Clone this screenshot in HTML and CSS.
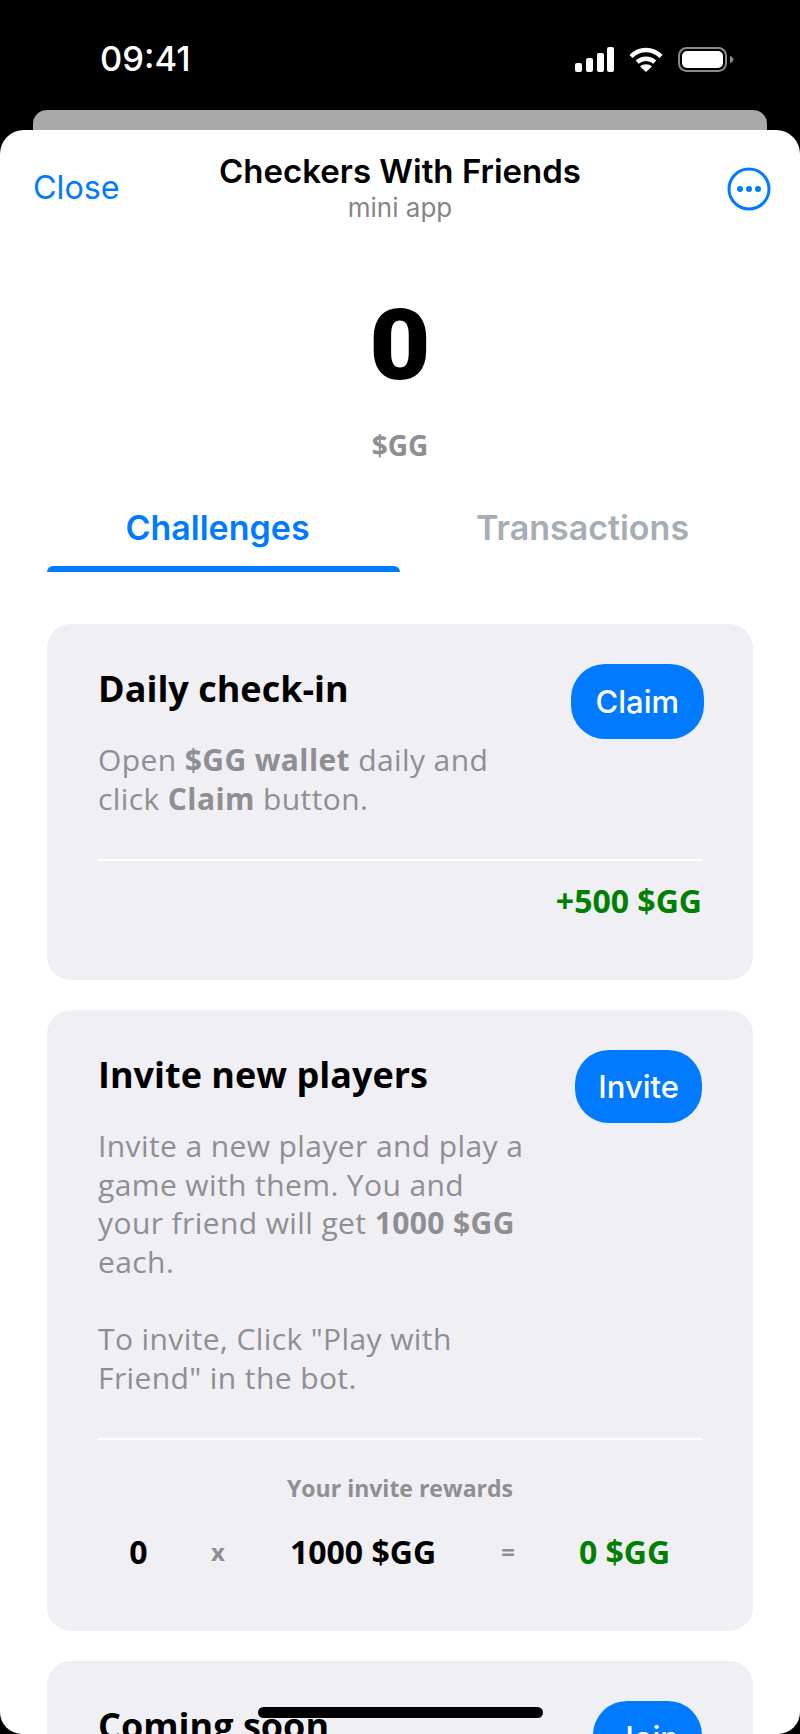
FILE: index.html
```html
<!DOCTYPE html>
<html lang="en">

<head>
    <meta charset="UTF-8">
    <meta name="viewport" content="width=device-width, initial-scale=1.0">
    <title>Checkers With Friends</title>
    <link rel="stylesheet" href="styles.css">
</head>

<body>
    <div class="screen">
        <div class="status-bar">
            <span class="time">09:41</span>
            <div class="status-icons">
                <svg class="signal" width="39" height="25" viewBox="0 0 39 25" fill="#fff">
                    <rect x="0" y="16" width="7" height="9" rx="2"></rect>
                    <rect x="11" y="11" width="7" height="14" rx="2"></rect>
                    <rect x="22" y="6" width="7" height="19" rx="2"></rect>
                    <rect x="32" y="0" width="7" height="25" rx="2"></rect>
                </svg>
                <svg class="wifi" width="34" height="25" viewBox="0 0 34 25" fill="none" stroke="#fff" stroke-width="4.4">
                    <path d="M2 9.5C10.5 .8 23.5 .8 32 9.5"></path>
                    <path d="M8.2 15.2C13.2 10.6 20.8 10.6 25.8 15.2"></path>
                    <path d="M17 25L11 19.4C14.4 16.6 19.6 16.6 23 19.4Z" fill="#fff" stroke="none"></path>
                </svg>
                <svg class="battery" width="56" height="25" viewBox="0 0 56 25">
                    <rect x="1" y="1" width="47" height="23" rx="7.5" fill="none" stroke="#8a8a8a" stroke-width="2"></rect>
                    <rect x="4" y="4" width="41" height="17" rx="5" fill="#fff"></rect>
                    <path d="M52 9C54 9.6 55.5 11 55.5 12.5S54 15.4 52 16Z" fill="#8a8a8a"></path>
                </svg>
            </div>
        </div>
        <div class="sheet-behind"></div>

        <div class="sheet">
            <header class="nav">
                <a class="close">Close</a>
                <div class="nav-title">
                    <h1>Checkers With Friends</h1>
                    <p>mini app</p>
                </div>
                <svg class="more" width="44" height="44" viewBox="0 0 44 44">
                    <circle cx="22" cy="22" r="20" fill="none" stroke="#007aff" stroke-width="3"></circle>
                    <circle cx="13" cy="22" r="3" fill="#007aff"></circle>
                    <circle cx="22" cy="22" r="3" fill="#007aff"></circle>
                    <circle cx="31" cy="22" r="3" fill="#007aff"></circle>
                </svg>
            </header>

            <div class="balance">
                <div class="balance-value">0</div>
                <div class="balance-unit">$GG</div>
            </div>

            <div class="tabs">
                <div class="tab active">Challenges</div>
                <div class="tab">Transactions</div>
            </div>

            <section class="card">
                <div class="card-top">
                    <div class="card-text">
                        <h2>Daily check-in</h2>
                        <p>Open <b>$GG wallet</b> daily and<br>click <b>Claim</b> button.</p>
                    </div>
                    <button class="action claim">Claim</button>
                </div>
                <div class="divider"></div>
                <div class="reward">+500 $GG</div>
            </section>

            <section class="card">
                <div class="card-top">
                    <div class="card-text">
                        <h2>Invite new players</h2>
                        <p>Invite a new player and play a<br>game with them. You and<br>your friend will get <b>1000 $GG</b><br>each.<br><br>To invite, Click "Play with<br>Friend" in the bot.</p>
                    </div>
                    <button class="action invite">Invite</button>
                </div>
                <div class="divider"></div>
                <div class="rewards-label">Your invite rewards</div>
                <div class="rewards-row">
                    <span>0</span>
                    <span class="sign">x</span>
                    <span>1000 $GG</span>
                    <span class="sign">=</span>
                    <span class="green">0 $GG</span>
                </div>
            </section>

            <section class="card">
                <div class="card-top">
                    <div class="card-text">
                        <h2>Coming soon</h2>
                    </div>
                    <button class="action join">Join</button>
                </div>
            </section>

            <div class="home-indicator"></div>
        </div>
    </div>
</body>

</html>
```

FILE: styles.css
```css
/* styles.css */

* {
    box-sizing: border-box;
}

html,
body {
    margin: 0;
    padding: 0;
    background-color: #000;
}

.screen {
    width: 800px;
    height: 1734px;
    overflow: hidden;
    font-family: "Open Sans", sans-serif;
}

.status-bar {
    height: 110px;
    padding: 40px 66px 0 100px;
    display: flex;
    justify-content: space-between;
    align-items: flex-start;
}

.time {
    color: #fff;
    font-family: Inter, sans-serif;
    font-size: 34.5px;
    font-weight: 500;
    line-height: 38px;
}

.status-icons {
    margin-top: 7px;
    display: flex;
    gap: 15px;
}

.sheet-behind {
    height: 20px;
    margin: 0 33px;
    background-color: #a9a9a9;
    border-radius: 14px 14px 0 0;
}

.sheet {
    position: relative;
    height: 1604px;
    padding: 0 47px;
    overflow: hidden;
    background-color: #fff;
    border-radius: 24px 24px 22px 22px;
}

.nav {
    height: 104px;
    margin: 0 -47px;
    padding: 0 33px;
    display: grid;
    grid-template-columns: 1fr auto 1fr;
    align-items: start;
}

.close {
    margin-top: 39px;
    color: #007aff;
    font-family: Inter, sans-serif;
    font-size: 32.3px;
    line-height: 38px;
}

.nav-title {
    margin-top: 20px;
    text-align: center;
}

.nav-title h1 {
    margin: 0;
    font-family: Inter, sans-serif;
    font-size: 33px;
    font-weight: 600;
    line-height: 43px;
    color: #000;
}

.nav-title p {
    margin: 0;
    font-family: Inter, sans-serif;
    font-size: 26px;
    line-height: 30px;
    color: #85858a;
}

.more {
    margin: 37px -4px 0 0;
    justify-self: end;
}

.balance {
    padding-top: 48px;
    text-align: center;
}

.balance-value {
    height: 118px;
    font-family: Roboto, sans-serif;
    font-size: 98px;
    font-weight: 900;
    line-height: 128px;
    color: #000;
    transform: scaleX(1.08);
}

.balance-unit {
    margin-top: 28px;
    font-size: 28px;
    font-weight: 700;
    line-height: 34px;
    color: #8e8e93;
}

.tabs {
    margin-top: 40px;
    display: grid;
    grid-template-columns: 353px 353px;
}

.tab {
    height: 70px;
    padding: 6px 0 0 12px;
    text-align: center;
    font-family: Inter, sans-serif;
    font-size: 34px;
    font-weight: 600;
    line-height: 40px;
    color: #a5adb5;
}

.tab.active {
    padding: 6px 12px 0 0;
    color: #007aff;
}

.tab.active::after {
    content: "";
    display: block;
    height: 6px;
    margin: 18px -12px 0 0;
    background-color: #007aff;
    border-radius: 6px 6px 0 0;
}

.card {
    margin-top: 52px;
    margin-bottom: -22px;
    padding: 40px 51px 0;
    height: 356px;
    background-color: #efeff4;
    border-radius: 24px;
}

.card+.card {
    height: 621px;
}

.card-top {
    display: flex;
    justify-content: space-between;
    align-items: flex-start;
}

.card h2 {
    margin: 5px 0 0;
    font-size: 36px;
    font-weight: 700;
    line-height: 40px;
    color: #000;
}

.card p {
    margin: 32px 0 0;
    font-size: 30px;
    line-height: 38.6px;
    letter-spacing: 0.4px;
    white-space: nowrap;
    color: #8e8e93;
}

.card p b {
    font-weight: 700;
}

.action {
    height: 73px;
    padding: 0 25px;
    border: none;
    border-radius: 34px;
    background-color: #007aff;
    color: #fff;
    font-family: Inter, sans-serif;
    font-size: 31px;
    font-weight: 500;
}

.claim {
    height: 75px;
    margin-right: -2px;
}

.invite {
    padding: 0 23px;
}

.join {
    padding: 0 23px;
}

.divider {
    height: 2px;
    margin-top: 41px;
    background-color: #fff;
}

.reward {
    margin-top: 22px;
    text-align: right;
    font-size: 32px;
    font-weight: 700;
    line-height: 36px;
    color: #008000;
}

.rewards-label {
    margin-top: 33px;
    text-align: center;
    font-size: 23px;
    font-weight: 700;
    line-height: 30px;
    color: #8e8e93;
}

.rewards-row {
    margin-top: 29px;
    display: grid;
    grid-template-columns: 81px 78px 212px 78px 155px;
    text-align: center;
    font-size: 32px;
    font-weight: 700;
    line-height: 40px;
    color: #000;
}

.rewards-row .sign {
    font-size: 24px;
    color: #8e8e93;
}

.rewards-row .green {
    color: #008000;
}

.home-indicator {
    position: absolute;
    left: 258px;
    bottom: 16px;
    width: 285px;
    height: 11px;
    background-color: #000;
    border-radius: 6px;
}
```
